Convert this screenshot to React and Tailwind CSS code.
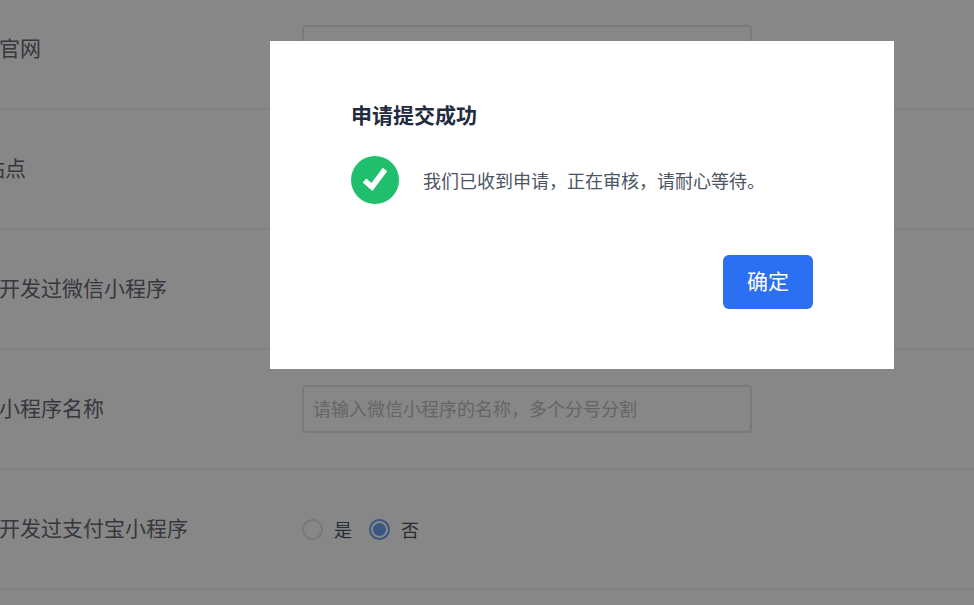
const rows = [
  { label: "公司官网", type: "input", placeholder: "http://www.baidu.com" },
  { label: "H5站点", type: "input", placeholder: "请输入H5站点的地址" },
  { label: "是否开发过微信小程序", type: "radio" },
  { label: "微信小程序名称", type: "input", placeholder: "请输入微信小程序的名称，多个分号分割" },
  { label: "是否开发过支付宝小程序", type: "radio" },
];

function Radio({ checked, label }) {
  return (
    <div className="flex items-center gap-[11px]">
      {checked ? (
        <span className="flex h-[21px] w-[21px] items-center justify-center rounded-full border-2 border-[#6ea3f5]">
          <span className="h-[13px] w-[13px] rounded-full bg-[#6ea3f5]"></span>
        </span>
      ) : (
        <span className="h-[21px] w-[21px] rounded-full border-2 border-[#e0e2e6]"></span>
      )}
      <span className="text-lg text-[#4b5563]">{label}</span>
    </div>
  );
}

function Row({ row }) {
  return (
    <div className="flex h-[120px] shrink-0 items-center border-b-2 border-[#f3f4f6]">
      <label className="w-[345px] shrink-0 pb-[3px] text-[21px] text-[#666b75]">{row.label}</label>
      {row.type === "input" ? (
        <input
          readOnly
          placeholder={row.placeholder}
          className="h-12 w-[450px] rounded border-2 border-[#e5e7eb] px-[9px] pb-[3px] text-lg placeholder:text-[#bcc0c6]"
        />
      ) : (
        <div className="flex items-center gap-[17px]">
          <Radio label="是" />
          <Radio label="否" checked />
        </div>
      )}
    </div>
  );
}

export default function App() {
  return (
    <div className="relative h-[605px] w-[974px] overflow-hidden bg-white font-['Noto_Sans_CJK_SC',sans-serif]">
      <div className="-ml-[43px] -mt-[10px] flex flex-col">
        {rows.map((row) => (
          <Row key={row.label} row={row} />
        ))}
      </div>

      <div className="absolute inset-0 bg-black/47 pl-[270px] pt-[41px]">
        <div className="h-[328px] w-[624px] bg-white px-[81px] pt-[59px]">
          <h2 className="text-[21px] leading-[28px] font-bold text-[#232b3f]">申请提交成功</h2>
          <div className="mt-[28px] flex items-center gap-6">
            <svg width="48" height="48" viewBox="0 0 48 48" className="shrink-0">
              <circle cx="24" cy="24" r="24" fill="#20bf6e" />
              <path d="M13.5 24.5l7.5 6.5 13-17.5" fill="none" stroke="#fff" strokeWidth="5.5" />
            </svg>
            <p className="text-lg whitespace-nowrap text-[#4b5563]">我们已收到申请，正在审核，请耐心等待。</p>
          </div>
          <div className="mt-[51px] flex justify-end">
            <button className="h-[54px] w-[90px] rounded-md bg-[#2b6ff2] pb-[3px] text-[21px] text-white">确定</button>
          </div>
        </div>
      </div>
    </div>
  );
}
